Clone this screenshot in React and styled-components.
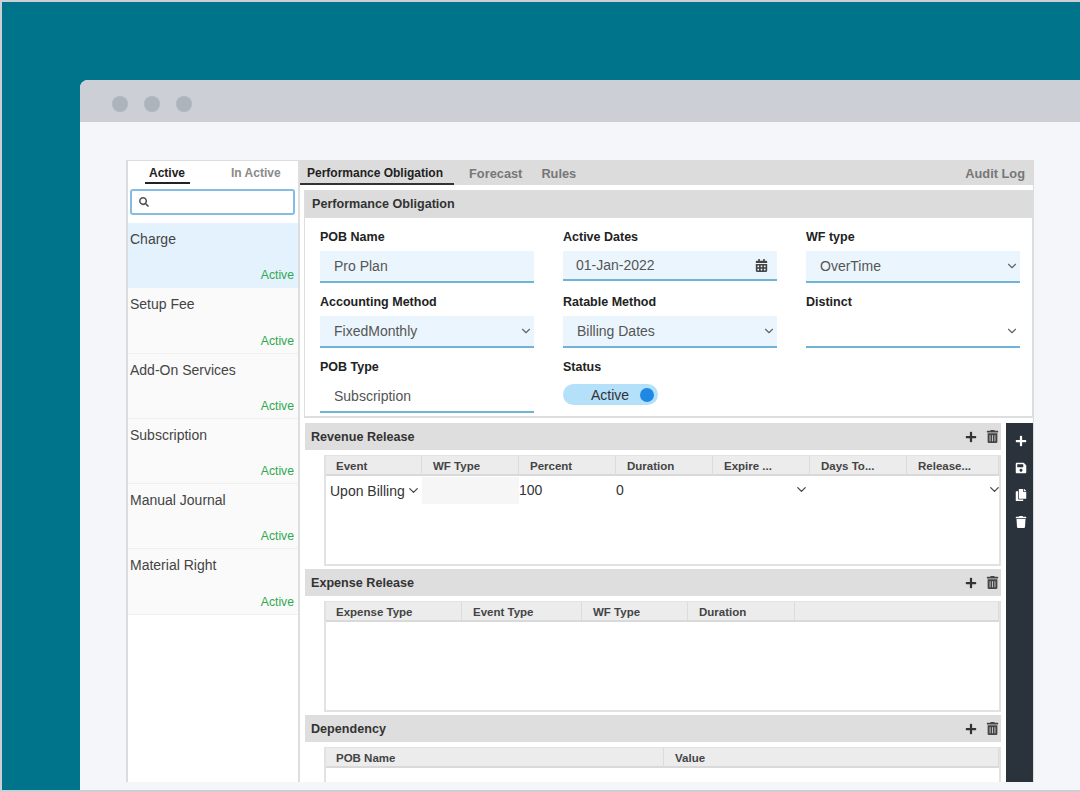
import styled, { createGlobalStyle } from "styled-components";
import { FaCalendarAlt, FaCopy, FaPlus, FaSave, FaSearch, FaTrash, FaTrashAlt } from "react-icons/fa";
import { FiChevronDown } from "react-icons/fi";

const GlobalStyle = createGlobalStyle`
  html, body {
    margin: 0;
    padding: 0;
    background: #ccd0d6;
  }
  * {
    box-sizing: border-box;
  }
`;

const Page = styled.div`
  width: 1080px;
  height: 792px;
  padding: 2px 0 2px 2px;
  overflow: hidden;
  font-family: "Liberation Sans", Arial, sans-serif;
`;

const Backdrop = styled.div`
  height: 100%;
  padding: 78px 0 0 78px;
  background: #00748a;
`;

const BrowserWindow = styled.div`
  height: 100%;
  border-top-left-radius: 8px;
  overflow: hidden;
  display: flex;
  flex-direction: column;
  background: #f4f6fa;
`;

const TitleBar = styled.div`
  height: 42px;
  flex: none;
  padding: 6px 0 0 32px;
  display: flex;
  align-items: center;
  gap: 16px;
  background: #ccd0d6;
`;

const Dot = styled.span`
  width: 16px;
  height: 16px;
  border-radius: 50%;
  background: #aeb4be;
`;

const Content = styled.div`
  flex: 1;
  min-height: 0;
  padding: 38px 46px 8px 46px;
`;

const AppPanel = styled.div`
  height: 100%;
  display: flex;
  overflow: hidden;
  background: #fff;
  border: solid #dcdcdc;
  border-width: 1px 1px 0 2px;
`;

const Sidebar = styled.aside`
  width: 172px;
  flex: none;
  border-right: 2px solid #dedede;
`;

const SideTabs = styled.div`
  height: 24px;
  padding: 0 0 0 17px;
  display: flex;
  gap: 37px;
`;

const SideTab = styled.div`
  height: 23px;
  padding: 5px 5px 0 4px;
  font-size: 12px;
  font-weight: bold;
  color: ${(p) => (p.$active ? "#222" : "#8a8a8a")};
  border-bottom: 2px solid ${(p) => (p.$active ? "#222" : "transparent")};
`;

const SearchBox = styled.div`
  height: 26px;
  margin: 4px 3px 8px 2px;
  padding-left: 7px;
  display: flex;
  align-items: center;
  font-size: 10px;
  color: #555;
  border: 2px solid #83bde3;
  border-radius: 3px;
`;

const ObligationItem = styled.div`
  height: 65.3px;
  padding: 8px 4px 5px 2px;
  display: flex;
  flex-direction: column;
  justify-content: space-between;
  background: ${(p) => (p.$selected ? "#e3f2fd" : "#fafafa")};
  border-bottom: 1px solid ${(p) => (p.$selected ? "#e3f2fd" : "#f0f0f0")};
`;

const ItemName = styled.div`
  font-size: 14px;
  line-height: 16px;
  color: #444;
`;

const ItemStatus = styled.div`
  font-size: 12.2px;
  line-height: 14px;
  text-align: right;
  color: #2fa84f;
`;

const Main = styled.main`
  flex: 1;
  min-width: 0;
  display: flex;
  flex-direction: column;
`;

const TabBar = styled.div`
  height: 24px;
  flex: none;
  padding-right: 8px;
  display: flex;
  align-items: flex-start;
  background: #dcdcdc;
`;

const MainTab = styled.div`
  height: 24px;
  padding: 5px ${(p) => (p.$end ? 0 : 11)}px 0 7px;
  margin-right: ${(p) => p.$gap || 0}px;
  margin-left: ${(p) => (p.$end ? "auto" : "0")};
  font-size: ${(p) => (p.$active ? 12 : 12.8)}px;
  font-weight: bold;
  color: ${(p) => (p.$active ? "#222" : "#777")};
  border-bottom: 2px solid ${(p) => (p.$active ? "#333" : "transparent")};
`;

const FormPanel = styled.section`
  height: 228px;
  flex: none;
  margin: 5px 0 0 4px;
  border: solid #dedede;
  border-width: 0 1px 2px 1px;
`;

const PanelHeading = styled.div`
  height: 28px;
  padding-left: 7px;
  display: flex;
  align-items: center;
  font-size: 12.6px;
  font-weight: bold;
  color: #333;
  background: #dcdcdc;
`;

const FormGrid = styled.div`
  padding: 11px 12px 0 15px;
  display: grid;
  grid-template-columns: repeat(3, 214px);
  column-gap: 29px;
`;

const FormField = styled.div`
  height: 65px;
`;

const FieldLabel = styled.div`
  height: 22px;
  padding-top: 1px;
  font-size: 12.5px;
  line-height: 15px;
  font-weight: bold;
  color: #222;
`;

const FieldValue = styled.div`
  height: ${(p) => (p.$date ? "30px" : "32px")};
  padding: ${(p) => (p.$date ? "0 9px 0 13px" : "0 1px 0 14px")};
  display: flex;
  align-items: center;
  justify-content: space-between;
  font-size: 14px;
  color: #555;
  background: ${(p) => (p.$plain ? "#fff" : "#ebf5fd")};
  border-bottom: 2px solid #70b3d6;
`;

const FieldChevron = styled(FiChevronDown)`
  width: 14px;
  height: 14px;
  color: #666;
`;

const Toggle = styled.div`
  width: 95px;
  height: 21px;
  margin-top: 3px;
  padding: 0 4px 0 28px;
  display: flex;
  align-items: center;
  justify-content: space-between;
  font-size: 14px;
  color: #333;
  background: #b5e0fa;
  border-radius: 11px;
`;

const Knob = styled.span`
  width: 14px;
  height: 14px;
  border-radius: 50%;
  background: #1e88e5;
`;

const Lower = styled.div`
  flex: 1;
  min-height: 0;
  margin-top: 5px;
  display: flex;
`;

const Sections = styled.div`
  width: 696px;
  margin-left: 5px;
  flex: none;
`;

const Rail = styled.div`
  width: 27px;
  margin-left: 5px;
  padding: 12px 0 0 2px;
  display: flex;
  flex-direction: column;
  align-items: center;
  gap: 15px;
  font-size: 12px;
  color: #fff;
  background: #2a323c;
`;

const SectionHeading = styled.div`
  height: 27px;
  padding: 0 2px 0 6px;
  display: flex;
  align-items: center;
  justify-content: space-between;
  font-size: 12.6px;
  font-weight: bold;
  color: #333;
  background: #dedede;
`;

const HeadingTools = styled.div`
  display: flex;
  align-items: center;
  gap: 9px;
  color: #333;
  font-size: 12px;
`;

const HeadingTrash = styled(FaTrashAlt)`
  width: 13px;
  height: 13px;
  color: #444;
`;

const DataTable = styled.div`
  height: 111px;
  margin: 5px 0 3px 19px;
  border: solid #e2e2e2;
  border-width: 1px 2px 2px 2px;
`;

const TableRow = styled.div`
  display: grid;
  grid-template-columns: ${(p) => p.$columns};
`;

const HeaderCell = styled.div`
  height: 20px;
  padding: 1px 0 0 11px;
  display: flex;
  align-items: center;
  overflow: hidden;
  white-space: nowrap;
  font-size: 11.5px;
  font-weight: bold;
  color: #444;
  background: #ececec;
  border-bottom: 2px solid #d9d9d9;
  border-right: 1px solid #dcdcdc;

  &:first-child {
    padding-left: 10px;
  }
`;

const BodyCell = styled.div`
  height: 27px;
  margin-top: 1px;
  padding: 0 ${(p) => (p.$end ? "1px" : "0")} 2px 0;
  display: flex;
  align-items: center;
  justify-content: ${(p) => (p.$end ? "flex-end" : "flex-start")};
  font-size: 14px;
  color: #333;
  background: ${(p) => (p.$muted ? "#f6f6f6" : "#fff")};
`;

const EventCell = styled(BodyCell)`
  padding: 0 0 0 4px;
  gap: 1px;
`;

const RowChevron = styled(FiChevronDown)`
  width: 15px;
  height: 15px;
  flex: none;
  margin-right: ${(p) => (p.$bleed ? "-4px" : "0")};
  color: #444;
`;

const items = ["Charge", "Setup Fee", "Add-On Services", "Subscription", "Manual Journal", "Material Right"];

const revenueColumns = ["Event", "WF Type", "Percent", "Duration", "Expire ...", "Days To...", "Release..."];
const revenueTemplate = "96px 97px 97px 97px 97px 97px 1fr";
const expenseColumns = ["Expense Type", "Event Type", "WF Type", "Duration", ""];
const dependencyColumns = ["POB Name", "Value"];

const Section = ({ title, columns, template, children }) => (
  <>
    <SectionHeading>
      {title}
      <HeadingTools>
        <FaPlus />
        <HeadingTrash />
      </HeadingTools>
    </SectionHeading>
    <DataTable>
      <TableRow $columns={template}>
        {columns.map((column, index) => (
          <HeaderCell key={index}>{column}</HeaderCell>
        ))}
      </TableRow>
      {children}
    </DataTable>
  </>
);

export default function App() {
  return (
    <>
      <GlobalStyle />
      <Page>
        <Backdrop>
          <BrowserWindow>
            <TitleBar>
              <Dot />
              <Dot />
              <Dot />
            </TitleBar>
            <Content>
              <AppPanel>
                <Sidebar>
                  <SideTabs>
                    <SideTab $active>Active</SideTab>
                    <SideTab>In Active</SideTab>
                  </SideTabs>
                  <SearchBox>
                    <FaSearch />
                  </SearchBox>
                  {items.map((item, index) => (
                    <ObligationItem key={item} $selected={index === 0}>
                      <ItemName>{item}</ItemName>
                      <ItemStatus>Active</ItemStatus>
                    </ObligationItem>
                  ))}
                </Sidebar>
                <Main>
                  <TabBar>
                    <MainTab $active $gap={8}>Performance Obligation</MainTab>
                    <MainTab $gap={1}>Forecast</MainTab>
                    <MainTab>Rules</MainTab>
                    <MainTab $end>Audit Log</MainTab>
                  </TabBar>
                  <FormPanel>
                    <PanelHeading>Performance Obligation</PanelHeading>
                    <FormGrid>
                      <FormField>
                        <FieldLabel>POB Name</FieldLabel>
                        <FieldValue>Pro Plan</FieldValue>
                      </FormField>
                      <FormField>
                        <FieldLabel>Active Dates</FieldLabel>
                        <FieldValue $date>
                          01-Jan-2022
                          <FaCalendarAlt size={13} color="#444" />
                        </FieldValue>
                      </FormField>
                      <FormField>
                        <FieldLabel>WF type</FieldLabel>
                        <FieldValue>
                          OverTime
                          <FieldChevron />
                        </FieldValue>
                      </FormField>
                      <FormField>
                        <FieldLabel>Accounting Method</FieldLabel>
                        <FieldValue>
                          FixedMonthly
                          <FieldChevron />
                        </FieldValue>
                      </FormField>
                      <FormField>
                        <FieldLabel>Ratable Method</FieldLabel>
                        <FieldValue>
                          Billing Dates
                          <FieldChevron />
                        </FieldValue>
                      </FormField>
                      <FormField>
                        <FieldLabel>Distinct</FieldLabel>
                        <FieldValue $plain>
                          <span />
                          <FieldChevron />
                        </FieldValue>
                      </FormField>
                      <FormField>
                        <FieldLabel>POB Type</FieldLabel>
                        <FieldValue $plain>Subscription</FieldValue>
                      </FormField>
                      <FormField>
                        <FieldLabel>Status</FieldLabel>
                        <Toggle>
                          Active
                          <Knob />
                        </Toggle>
                      </FormField>
                    </FormGrid>
                  </FormPanel>
                  <Lower>
                    <Sections>
                      <Section title="Revenue Release" columns={revenueColumns} template={revenueTemplate}>
                        <TableRow $columns={revenueTemplate}>
                          <EventCell>
                            Upon Billing
                            <RowChevron />
                          </EventCell>
                          <BodyCell $muted />
                          <BodyCell>100</BodyCell>
                          <BodyCell>0</BodyCell>
                          <BodyCell $end>
                            <RowChevron />
                          </BodyCell>
                          <BodyCell />
                          <BodyCell $end>
                            <RowChevron $bleed />
                          </BodyCell>
                        </TableRow>
                      </Section>
                      <Section title="Expense Release" columns={expenseColumns} template="136px 120px 106px 107px 1fr" />
                      <Section title="Dependency" columns={dependencyColumns} template="338px 1fr" />
                    </Sections>
                    <Rail>
                      <FaPlus />
                      <FaSave />
                      <FaCopy />
                      <FaTrash />
                    </Rail>
                  </Lower>
                </Main>
              </AppPanel>
            </Content>
          </BrowserWindow>
        </Backdrop>
      </Page>
    </>
  );
}
